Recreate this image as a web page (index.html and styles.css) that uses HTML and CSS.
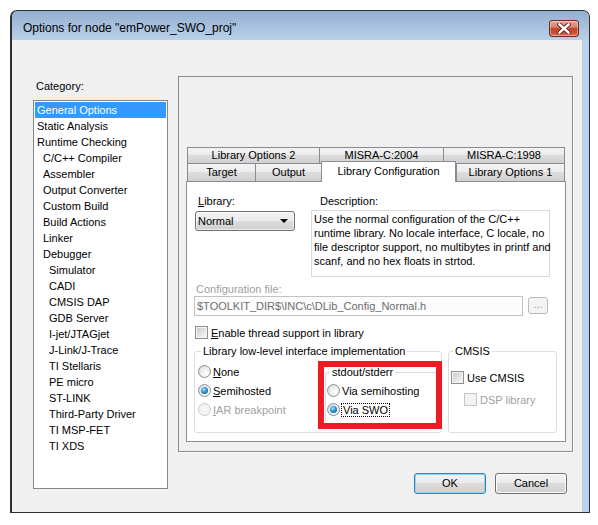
FILE: index.html
```html
<!DOCTYPE html>
<html>
<head>
<meta charset="utf-8">
<title>Options for node</title>
<link rel="stylesheet" href="styles.css">
</head>
<body>
<div class="window">
  <div class="titlebar">
    <span class="title">Options for node "emPower_SWO_proj"</span>
    <span class="close">
      <svg width="14" height="11" viewBox="0 0 14 11">
        <path d="M2.5 1.5 L11.5 9.5 M11.5 1.5 L2.5 9.5" stroke="#5a2018" stroke-width="4.2" stroke-linecap="square" fill="none"/>
        <path d="M2.5 1.5 L11.5 9.5 M11.5 1.5 L2.5 9.5" stroke="#ffffff" stroke-width="2.4" stroke-linecap="square" fill="none"/>
      </svg>
    </span>
  </div>
  <div class="client">
    <div class="left">
      <div class="cat-label">Category:</div>
      <ul class="list">
        <li class="sel">General Options</li>
        <li>Static Analysis</li>
        <li>Runtime Checking</li>
        <li class="l1">C/C++ Compiler</li>
        <li class="l1">Assembler</li>
        <li class="l1">Output Converter</li>
        <li class="l1">Custom Build</li>
        <li class="l1">Build Actions</li>
        <li class="l1">Linker</li>
        <li class="l1">Debugger</li>
        <li class="l2">Simulator</li>
        <li class="l2">CADI</li>
        <li class="l2">CMSIS DAP</li>
        <li class="l2">GDB Server</li>
        <li class="l2">I-jet/JTAGjet</li>
        <li class="l2">J-Link/J-Trace</li>
        <li class="l2">TI Stellaris</li>
        <li class="l2">PE micro</li>
        <li class="l2">ST-LINK</li>
        <li class="l2">Third-Party Driver</li>
        <li class="l2">TI MSP-FET</li>
        <li class="l2">TI XDS</li>
      </ul>
    </div>
    <div class="right">
      <div class="frame">
        <div class="tabrow back">
          <div class="tab w-lo2">Library Options 2</div>
          <div class="tab w-m04">MISRA-C:2004</div>
          <div class="tab w-m98 last">MISRA-C:1998</div>
        </div>
        <div class="tabrow front">
          <div class="tab w-target">Target</div>
          <div class="tab w-output">Output</div>
          <div class="tab w-libconf active">Library Configuration</div>
          <div class="tab w-lo1 last">Library Options 1</div>
        </div>
        <div class="page">
          <div class="top-row">
            <div class="lib-col">
              <div class="lbl lib-lbl"><u>L</u>ibrary:</div>
              <div class="combo"><span>Normal</span><span class="arrow"></span></div>
            </div>
            <div class="desc-col">
              <div class="lbl desc-lbl">Description:</div>
              <div class="desc-box">Use the normal configuration of the C/C++<br>runtime library. No locale interface, C locale, no<br>file descriptor support, no multibytes in printf and<br>scanf, and no hex floats in strtod.</div>
            </div>
          </div>
          <div class="cfg-lbl disabled">Configuration file:</div>
          <div class="cfg-row">
            <div class="cfg-input">$TOOLKIT_DIR$\INC\c\DLib_Config_Normal.h</div>
            <div class="browse">...</div>
          </div>
          <div class="check-row thread">
            <span class="check"></span><span><u>E</u>nable thread support in library</span>
          </div>
          <div class="groups">
            <fieldset class="group g-lowlevel">
              <legend>Library low-level interface implementation</legend>
              <div class="g-body">
                <div class="radios">
                  <div class="radio-row"><span class="radio"></span><span><u>N</u>one</span></div>
                  <div class="radio-row"><span class="radio on"></span><span><u>S</u>emihosted</span></div>
                  <div class="radio-row disabled"><span class="radio off"></span><span><u>I</u>AR breakpoint</span></div>
                </div>
                <fieldset class="group g-stdout">
                  <legend>stdout/stderr</legend>
                  <div class="g-body2">
                    <div class="radio-row"><span class="radio"></span><span>Via semihosting</span></div>
                    <div class="radio-row"><span class="radio on"></span><span class="focus">Via SWO</span></div>
                  </div>
                </fieldset>
              </div>
              <div class="highlight"></div>
            </fieldset>
            <fieldset class="group g-cmsis">
              <legend>CMSIS</legend>
              <div class="g-body3">
                <div class="check-row"><span class="check"></span><span>Use CMSIS</span></div>
                <div class="check-row dsp disabled"><span class="check off"></span><span>DSP library</span></div>
              </div>
            </fieldset>
          </div>
        </div>
      </div>
      <div class="buttons">
        <div class="btn default">OK</div>
        <div class="btn">Cancel</div>
      </div>
    </div>
  </div>
</div>
</body>
</html>
```

FILE: styles.css
```css
* { box-sizing: border-box; }

body {
  margin: 0;
  background: #ffffff;
  font-family: "Liberation Sans", Arial, sans-serif;
  font-size: 11px;
  color: #000;
}

.window {
  margin: 10px 0 0 10px;
  width: 580px;
  height: 503px;
  border: 1px solid #2d2f33;
  border-left-width: 2px;
  border-radius: 7px 7px 0 0;
  background: #b9d1ea;
  display: flex;
  flex-direction: column;
  overflow: hidden;
}

.titlebar {
  height: 29px;
  flex: none;
  display: flex;
  align-items: center;
  padding: 5px 10px 0 11px;
  background: linear-gradient(#93afd0, #b9d1ea);
}

.title {
  flex: 1;
  font-size: 12px;
  color: #000;
}

.close {
  width: 30px;
  height: 17px;
  border: 1px solid #6a2b22;
  border-radius: 3px;
  background: linear-gradient(#e6a898 0%, #d9846f 40%, #c4442a 52%, #c85232 80%, #d9794f 100%);
  box-shadow: inset 0 0 0 1px rgba(255, 255, 255, 0.35);
  display: flex;
  align-items: center;
  justify-content: center;
}

.client {
  flex: 1;
  margin-right: 7px;
  background: #f0f0f0;
  display: flex;
  gap: 10px;
  padding: 36px 0 0 21px;
}

.left {
  width: 135px;
  display: flex;
  flex-direction: column;
}

.cat-label {
  padding: 3px 0 0 3px;
  line-height: 14px;
}

.list {
  margin: 7px 0 0;
  padding: 1px;
  height: 389px;
  list-style: none;
  border: 1px solid #828790;
  background: #fff;
}

.list li {
  height: 16px;
  line-height: 16px;
  padding-left: 2px;
  white-space: nowrap;
}

.list li.l1 { padding-left: 8px; }
.list li.l2 { padding-left: 14px; }
.list li.sel { background: #3399ff; color: #fff; }

.right {
  width: 395px;
  display: flex;
  flex-direction: column;
}

.frame {
  height: 376px;
  border: 1px solid #8b8b8b;
  box-shadow: 1px 1px 0 #ffffff;
  padding: 70px 6px 9px 7px;
  display: flex;
  flex-direction: column;
}

.tabrow {
  display: flex;
  height: 17px;
  flex: none;
  padding-left: 1px;
}

.tab {
  border: 1px solid #898c95;
  border-right: none;
  border-bottom: none;
  background: linear-gradient(#f3f3f3 0%, #ebebeb 50%, #dddddd 50%, #d0d0d0 100%);
  text-align: center;
  line-height: 15px;
  white-space: nowrap;
}

.tab.last { border-right: 1px solid #898c95; }
.back .tab { border-bottom: 1px solid #898c95; }
.front .tab { border-top: none; padding-top: 1px; }

.front .tab.active {
  position: relative;
  z-index: 1;
  height: 21px;
  margin-top: -3px;
  border: 1px solid #898c95;
  border-bottom: none;
  background: #fff;
  padding-top: 2px;
}

.w-lo2 { width: 132px; }
.w-m04 { width: 124px; }
.w-m98 { width: 122px; }
.w-target { width: 68px; }
.w-output { width: 66px; }
.w-libconf { width: 135px; }
.w-lo1 { width: 109px; }

.page {
  flex: 1;
  border: 1px solid #898c95;
  background: #fff;
  padding: 12px 0 0 8px;
}

.lbl { line-height: 14px; }

.top-row {
  display: flex;
  gap: 16px;
}

.lib-col { width: 100px; }
.lib-lbl { padding-left: 3px; }

.combo {
  margin-top: 3px;
  height: 20px;
  border: 1px solid #707070;
  border-radius: 3px;
  background: linear-gradient(#f2f2f2 0%, #ebebeb 50%, #dddddd 50%, #cfcfcf 100%);
  box-shadow: inset 0 0 0 1px rgba(255, 255, 255, 0.6);
  display: flex;
  align-items: center;
  justify-content: space-between;
  padding: 0 6px 0 2px;
}

.arrow {
  width: 0;
  height: 0;
  border-left: 4px solid transparent;
  border-right: 4px solid transparent;
  border-top: 4px solid #000;
}

.desc-col { width: 239px; }
.desc-lbl { padding-left: 9px; }

.desc-box {
  margin-top: 2px;
  height: 67px;
  border: 1px solid #d6dbe0;
  padding: 1px 2px 0;
  line-height: 14px;
  white-space: nowrap;
}

.disabled { color: #a0a0a0; }

.cfg-lbl {
  margin-top: 6px;
  padding-left: 1px;
  line-height: 13px;
}

.cfg-row {
  display: flex;
  gap: 5px;
  margin-left: -1px;
}

.cfg-input {
  width: 329px;
  height: 20px;
  border: 1px solid #c3c3c3;
  background: #fcfcfc;
  color: #6d6d6d;
  line-height: 18px;
  padding-left: 2px;
  white-space: nowrap;
}

.browse {
  width: 20px;
  height: 17px;
  margin-top: 1px;
  border: 1px solid #b6b9bd;
  border-radius: 3px;
  background: #f4f4f4;
  color: #a0a0a0;
  text-align: center;
  line-height: 13px;
}

.check-row {
  display: flex;
  align-items: center;
  gap: 3px;
  height: 17px;
}

.check-row.thread {
  margin-top: 8px;
}

.check {
  width: 13px;
  height: 13px;
  flex: none;
  border: 1px solid #8e8f8f;
  background: linear-gradient(135deg, #c3c6cb 0%, #e6e7e8 60%, #f6f6f6 100%);
  box-shadow: inset 0 0 0 1px #f4f4f4;
}

.check.off {
  border-color: #c6c6c6;
  background: #f3f3f3;
  box-shadow: none;
}

.groups {
  display: flex;
  gap: 6px;
  margin: 4px 0 0 -1px;
}

.group {
  margin: 0;
  padding: 0;
  border: 1px solid #d5dfe5;
  border-radius: 3px;
  min-inline-size: 0;
}

.group legend {
  padding: 0 2px;
  line-height: 13px;
}

.g-lowlevel {
  position: relative;
  width: 248px;
  height: 88px;
}

.g-lowlevel > legend { margin-left: 6px; }

.g-body {
  display: flex;
  padding: 4px 4px 0 3px;
}

.radios { flex: 1; }

.radio-row {
  display: flex;
  align-items: center;
  gap: 2px;
  height: 19px;
  white-space: nowrap;
}

.radio {
  width: 13px;
  height: 13px;
  flex: none;
  border-radius: 50%;
  border: 1px solid #8e8f8f;
  background: radial-gradient(circle at 65% 65%, #ffffff 0%, #eeeeee 45%, #d2d2d2 100%);
  display: flex;
  align-items: center;
  justify-content: center;
}

.radio.on::after {
  content: "";
  width: 7px;
  height: 7px;
  border-radius: 50%;
  background: radial-gradient(circle at 40% 35%, #a7e4ff 0%, #2b93d6 45%, #0b4a85 100%);
}

.radio.off {
  border-color: #c8c8c8;
  background: #f4f4f4;
}

.g-stdout {
  width: 112px;
  height: 58px;
  margin-top: 4px;
}

.g-stdout > legend { margin-left: 4px; }

.g-body2 { padding: 2px 0 0 1px; }

.focus {
  outline: 1px dotted #000;
  padding: 0 1px;
}

.highlight {
  position: absolute;
  left: 123px;
  top: 3px;
  width: 124px;
  height: 68px;
  border: 6px solid #ed1c24;
  pointer-events: none;
}

.g-cmsis {
  width: 109px;
  height: 88px;
}

.g-cmsis > legend { margin-left: 4px; }

.g-body3 { padding: 11px 0 0 2px; }

.check-row.dsp {
  margin-top: 5px;
  padding-left: 13px;
}

.buttons {
  display: flex;
  justify-content: flex-end;
  gap: 9px;
  margin-top: 21px;
  padding-right: 6px;
}

.btn {
  width: 72px;
  height: 21px;
  border: 1px solid #707070;
  border-radius: 3px;
  background: linear-gradient(#f2f2f2 0%, #ebebeb 50%, #dddddd 50%, #cfcfcf 100%);
  box-shadow: inset 0 0 0 1px #fcfcfc;
  text-align: center;
  line-height: 19px;
}

.btn.default {
  border-color: #3c7fb1;
  box-shadow: inset 0 0 0 1px #8ed3f8;
}
```
